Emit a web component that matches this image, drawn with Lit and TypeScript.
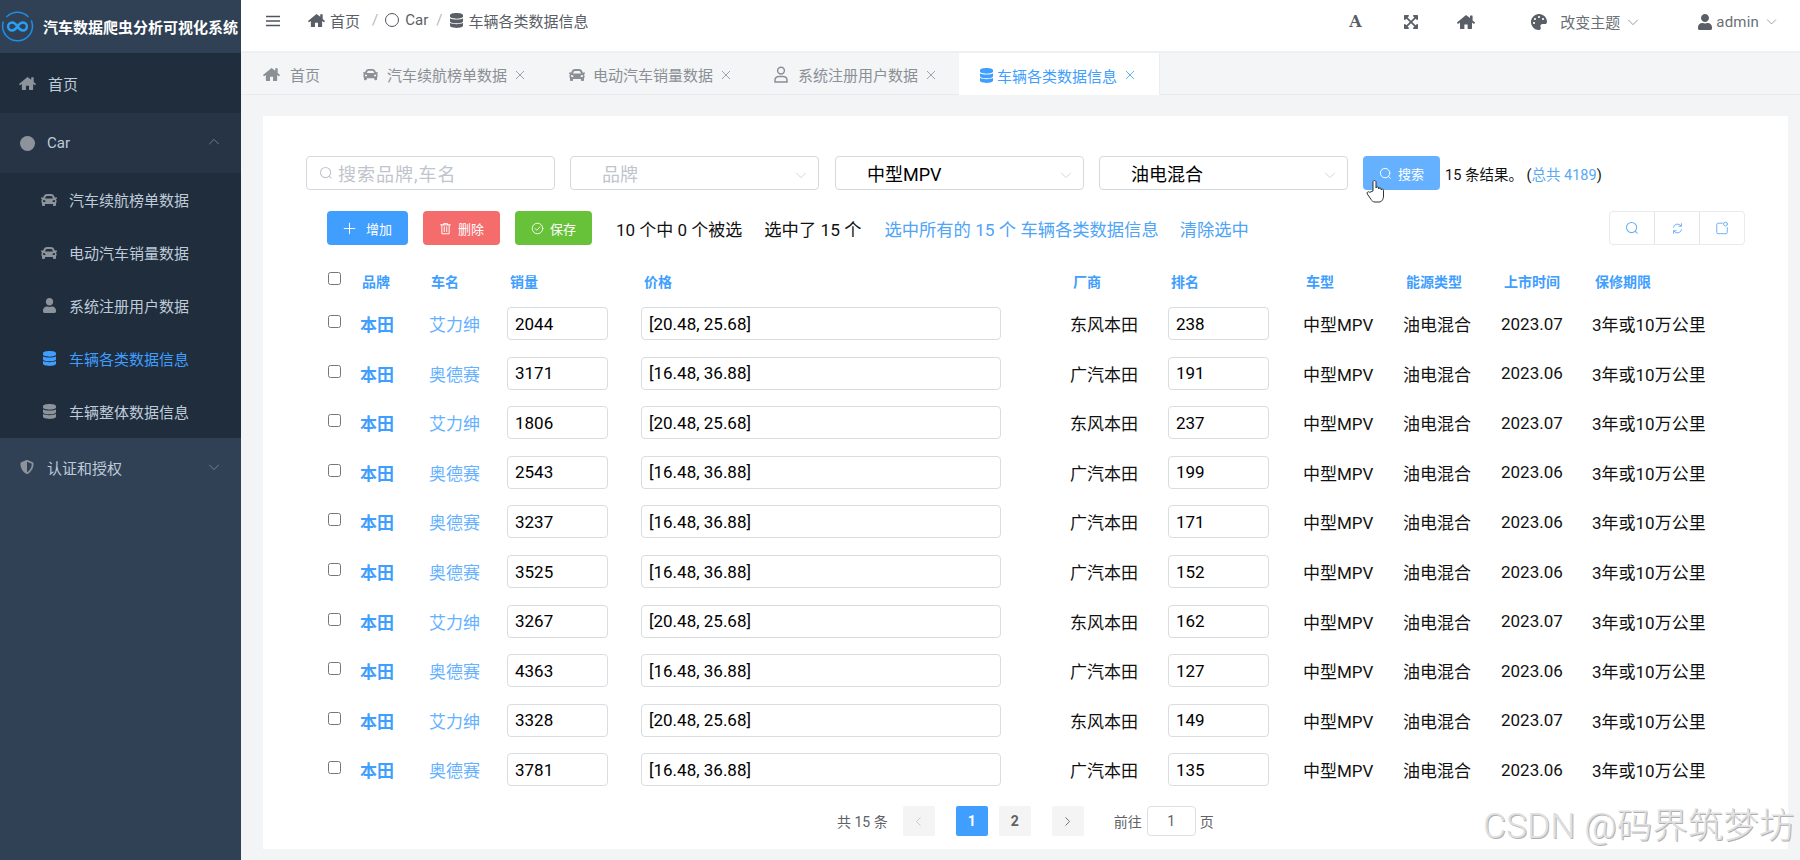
import { LitElement, html, css, svg } from "lit";
import { customElement } from "lit/decorators.js";

const FA = (vb: string, d: string, w: number, h: number) =>
  html`<svg class="ic" width=${w} height=${h} viewBox=${vb} fill="currentColor"><path d=${d}></path></svg>`;
const P = {
  home: "M288 32L8 262c-8 7-9 17-3 25l18 22c7 8 17 9 25 2l48-39v188c0 10 8 16 16 16h124V336h104v140h124c10 0 16-8 16-16V272l48 39c8 7 18 6 25-2l18-22c6-8 5-18-3-25l-69-57V60c0-8-6-14-14-14h-56c-8 0-14 6-14 14v66z",
  car: "M499.99 176h-59.87l-16.64-41.6C406.38 91.63 365.57 64 319.5 64h-127c-46.06 0-86.88 27.63-103.99 70.4L71.87 176H12.01C4.2 176-1.53 183.34.37 190.91l6 24C7.7 220.25 12.5 224 18.01 224h20.07C24.65 235.73 16 252.78 16 272v48c0 16.12 6.16 30.67 16 41.93V416c0 17.67 14.33 32 32 32h32c17.67 0 32-14.33 32-32v-32h256v32c0 17.67 14.33 32 32 32h32c17.67 0 32-14.33 32-32v-54.07c9.84-11.25 16-25.8 16-41.93v-48c0-19.22-8.65-36.27-22.07-48H494c5.51 0 10.31-3.75 11.64-9.09l6-24c1.89-7.57-3.84-14.91-11.65-14.91zm-352.06-17.83c7.29-18.22 24.94-30.17 44.57-30.17h127c19.63 0 37.28 11.95 44.57 30.17L384 208H128l19.93-49.83zM96 319.8c-19.2 0-32-12.76-32-31.9S76.8 256 96 256s48 28.71 48 47.85-28.8 15.95-48 15.95zm320 0c-19.2 0-48 3.19-48-15.95S396.8 256 416 256s32 12.76 32 31.9-12.8 31.9-32 31.9z",
  user: "M224 256c70.7 0 128-57.3 128-128S294.7 0 224 0 96 57.3 96 128s57.3 128 128 128zm89.6 32h-16.7c-22.2 10.2-46.9 16-72.9 16s-50.6-5.8-72.9-16h-16.7C60.2 288 0 348.2 0 422.4V464c0 26.5 21.5 48 48 48h352c26.5 0 48-21.5 48-48v-41.6c0-74.2-60.2-134.4-134.4-134.4z",
  db: "M448 73.143v45.714C448 159.143 347.667 192 224 192S0 159.143 0 118.857V73.143C0 32.857 100.333 0 224 0s224 32.857 224 73.143zM448 176v102.857C448 319.143 347.667 352 224 352S0 319.143 0 278.857V176c48.125 33.143 136.208 48.572 224 48.572S399.874 209.143 448 176zm0 160v102.857C448 479.143 347.667 512 224 512S0 479.143 0 438.857V336c48.125 33.143 136.208 48.572 224 48.572S399.874 369.143 448 336z",
  palette: "M204.3 5C104.9 24.4 24.8 104.3 5.2 203.4c-37 187 131.7 326.4 258.8 306.7 41.2-6.4 61.4-54.6 42.5-91.7-23.1-45.4 9.9-98.4 60.9-98.4h79.7c35.8 0 64.8-29.6 64.9-65.3C511.5 97.1 368.1-26.9 204.3 5zM96 320c-17.7 0-32-14.3-32-32s14.3-32 32-32 32 14.3 32 32-14.3 32-32 32zm32-128c-17.7 0-32-14.3-32-32s14.3-32 32-32 32 14.3 32 32-14.3 32-32 32zm128-64c-17.7 0-32-14.3-32-32s14.3-32 32-32 32 14.3 32 32-14.3 32-32 32zm128 64c-17.7 0-32-14.3-32-32s14.3-32 32-32 32 14.3 32 32-14.3 32-32 32z",
  shield: "M466.5 83.7l-192-80a48.15 48.15 0 0 0-36.9 0l-192 80C27.7 91.1 16 108.6 16 128c0 198.5 114.5 335.7 221.5 380.3 11.8 4.9 25.1 4.9 36.9 0C360.1 472.6 496 349.3 496 128c0-19.4-11.7-36.9-29.5-44.3zM256.1 446.3l-.1-381 175.9 73.3c-3.3 151.4-82.1 261.1-175.8 307.7z",
  expand: "M448 344v112a23.94 23.94 0 0 1-24 24H312c-21.39 0-32.09-25.9-17-41l36.2-36.2L224 295.6 116.77 402.9 153 439c15.09 15.1 4.39 41-17 41H24a23.94 23.94 0 0 1-24-24V344c0-21.4 25.89-32.1 41-17l36.19 36.2L184.46 256 77.18 148.7 41 184.9c-15.1 15.1-41 4.4-41-17V56a23.94 23.94 0 0 1 24-24h112c21.39 0 32.09 25.9 17 41l-36.2 36.2L224 216.4l107.23-107.3L295 73c-15.09-15.1-4.39-41 17-41h112a23.94 23.94 0 0 1 24 24v112c0 21.4-25.89 32.1-41 17l-36.19-36.2L263.54 256l107.28 107.3L407 327.1c15.1-15.2 41-4.5 41 16.9z",
};
const home = (w = 16) => FA("0 0 576 512", P.home, w, Math.round((w * 512) / 576));
const car = (w = 16) => FA("0 0 512 512", P.car, w, w);
const user = (w = 13) => FA("0 0 448 512", P.user, w, Math.round((w * 512) / 448));
const db = (w = 13) => FA("0 0 448 512", P.db, w, Math.round((w * 512) / 448));

const line = (size: number, body: unknown, sw = 1) =>
  html`<svg class="ic" width=${size} height=${size} viewBox="0 0 16 16" fill="none" stroke="currentColor" stroke-width=${sw} stroke-linecap="round" stroke-linejoin="round">${body}</svg>`;
const search = (s = 13) => line(s, svg`<circle cx="7.5" cy="7.5" r="5.8"></circle><path d="M11.8 11.8L14 14"></path>`, 1.2);
const chevDown = (s = 12) => line(s, svg`<path d="M2 5.5l6 6 6-6"></path>`, 1);
const chevUp = (s = 12) => line(s, svg`<path d="M2 10.5l6-6 6 6"></path>`, 1);
const close = (s = 10) => line(s, svg`<path d="M2 2l12 12M14 2L2 14"></path>`, 1.3);
const userOutline = html`<svg class="ic" width="14" height="17" viewBox="0 0 14 17" fill="none" stroke="currentColor" stroke-width="1.5"><circle cx="7" cy="4.6" r="3.4"></circle><path d="M1 16v-1.6C1 11.9 3 10.6 5 10.6h4c2 0 4 1.3 4 3.8V16z"></path></svg>`;

const rows = [
  ["艾力绅", "2044", "[20.48, 25.68]", "东风本田", "238", "2023.07"],
  ["奥德赛", "3171", "[16.48, 36.88]", "广汽本田", "191", "2023.06"],
  ["艾力绅", "1806", "[20.48, 25.68]", "东风本田", "237", "2023.07"],
  ["奥德赛", "2543", "[16.48, 36.88]", "广汽本田", "199", "2023.06"],
  ["奥德赛", "3237", "[16.48, 36.88]", "广汽本田", "171", "2023.06"],
  ["奥德赛", "3525", "[16.48, 36.88]", "广汽本田", "152", "2023.06"],
  ["艾力绅", "3267", "[20.48, 25.68]", "东风本田", "162", "2023.07"],
  ["奥德赛", "4363", "[16.48, 36.88]", "广汽本田", "127", "2023.06"],
  ["艾力绅", "3328", "[20.48, 25.68]", "东风本田", "149", "2023.07"],
  ["奥德赛", "3781", "[16.48, 36.88]", "广汽本田", "135", "2023.06"],
];
const heads = ["品牌", "车名", "销量", "价格", "厂商", "排名", "车型", "能源类型", "上市时间", "保修期限"];

@customElement("app-root")
export class AppRoot extends LitElement {
  static styles = css`
    :host { display: block; width: 1800px; height: 860px; overflow: hidden; position: relative;
      font-family: Roboto, "Noto Sans CJK SC", sans-serif; background: #f3f4f6; }
    * { box-sizing: border-box; }
    .ic { display: block; flex: none; }
    .app { display: flex; height: 860px; }

    .side { width: 241px; flex: none; background: #304156; color: #bfcbd9; font-size: 15px; }
    .logo { height: 53px; display: flex; align-items: center; padding: 0 0 0 1px; gap: 9px; color: #fff; font-weight: 700; font-size: 15px; white-space: nowrap; }
    .logo svg { flex: none; }
    .mi { display: flex; align-items: center; gap: 12px; padding-left: 20px; height: 60px; position: relative; }
    .mi .ic { color: #8d939b; }
    .mi.home { background: #1f2d3d; padding-left: 19px; }
    .mi.car { background: #263445; }
    .mi.last { height: 58px; gap: 13px; }
    .dot { width: 15px; height: 15px; border-radius: 50%; background: #8d939b; flex: none; }
    .mi .chev { position: absolute; left: 208px; top: 23px; color: #7d8794; }
    .sub { background: #1f2d3d; }
    .si { height: 53px; display: flex; align-items: center; padding-left: 41px; gap: 12px; }
    .si .ic { color: #8d939b; }
    .si .slot { width: 16px; display: flex; justify-content: center; flex: none; }
    .si.on, .si.on .ic { color: #409eff; }

    .main { flex: 1; min-width: 0; display: flex; flex-direction: column; }
    .top { height: 53px; flex: none; background: #fff; border-bottom: 2px solid #eef0f3; display: flex; align-items: center; padding: 0 23px 11px 25px; color: #5a5e66; font-size: 15px; position: relative; }
    .burger { color: #50545b; margin-right: 28px; margin-top: 2px; }
    .crumb { display: flex; align-items: center; }
    .crumb .sep { color: #b4b8be; margin: 0 7px 0 12px; }
    .crumb .ring { width: 14px; height: 14px; border: 1.5px solid #50545b; border-radius: 50%; margin-right: 6px; }
    .crumb .t { margin-left: 5px; }
    .crumb .sep2 { color: #b4b8be; margin: 0 8px; }
    .tools { margin-left: auto; display: flex; align-items: center; color: #5a5e66; padding-top: 3px; }
    .tools .a { font-family: "DejaVu Serif", "Liberation Serif", serif; font-weight: 700; font-size: 16px; width: 14px; line-height: 18px; margin-right: 41px; }
    .tools .gap1 { margin-right: 39px; }
    .tools .gap2 { margin-right: 56px; }
    .tools .t2 { margin-left: 13px; color: #6b6f76; }
    .tools .c { margin-left: 7px; color: #777; }
    .tools .gap3 { margin-right: 59px; }
    .tools .t3 { margin-left: 4px; font-size: 15px; letter-spacing: .2px; color: #6b6f76; }
    .tools .c2 { margin-left: 7px; color: #777; }

    .tabs { height: 42px; flex: none; background: #f4f5f7; border-bottom: 1px solid #e8eaed; display: flex; font-size: 15px; color: #8b8f96; padding-left: 2px; gap: 3px; }
    .tab { display: flex; align-items: center; height: 41px; padding: 2px 20px 0; white-space: nowrap; }
    .tab .ic { color: #8b8f96; }
    .tab .x { margin-left: 8px; color: #a0a4aa; }
    .tab.a { background: #fff; color: #409eff; height: 42px; padding: 2px 24px 0 21px; border-right: 1px solid #ecedf0; }
    .tab.a .ic { color: #409eff; }

    .body { flex: 1; padding: 21px 12px 11px 22px; min-height: 0; }
    .card { background: #fff; height: 100%; padding: 40px 43px 0 43px; }

    .filter { display: flex; align-items: stretch; height: 34px; font-size: 18px; color: #000; }
    .box { border: 1px solid #d5d8de; border-radius: 4px; display: flex; align-items: center; position: relative; background: #fff; }
    .box.s1 { width: 249px; padding-left: 12px; margin-right: 15px; color: #c0c4cc; gap: 5px; letter-spacing: 1px; }
    .box.s { width: 249px; padding-left: 31px; margin-right: 15px; }
    .box.s.ph { color: #c0c4cc; margin-right: 16px; }
    .box .chev { position: absolute; right: 11px; top: 12px; color: #c3c7ce; }
    .go { width: 77px; background: #66b1ff; border-radius: 4px; color: #fff; font-size: 13px; display: flex; align-items: center; justify-content: center; gap: 6px; position: relative; }
    .res { margin-left: 5px; font-size: 14.5px; align-self: center; color: #111; white-space: nowrap; }
    .res span { color: #5aa9f5; }
    .hand { position: absolute; left: 3px; top: 23px; z-index: 2; }

    .bar { display: flex; align-items: center; height: 34px; margin: 21px 0 0 21px; font-size: 17px; color: #111; white-space: nowrap; }
    .btn { height: 34px; border-radius: 4px; color: #fff; font-size: 13px; display: flex; align-items: center; justify-content: center; }
    .btn.add { width: 81px; background: #409eff; gap: 10px; margin-right: 15px; }
    .btn.del { width: 77px; background: #f56c6c; gap: 6px; margin-right: 15px; }
    .btn.sav { width: 77px; background: #67c23a; gap: 6px; margin-right: 24px; }
    .bar .p2 { margin-left: 22px; font-size: 17.3px; }
    .bar .l1 { margin-left: 23px; color: #4ea4f7; font-size: 17.3px; }
    .bar .l2 { margin-left: 21px; color: #4ea4f7; font-size: 17.3px; }
    .grp { margin-left: auto; display: flex; width: 136px; height: 34px; border: 1px solid #e8eaee; border-radius: 4px; color: #69b0f5; }
    .grp div { flex: 1; display: flex; align-items: center; justify-content: center; border-left: 1px solid #e2e4e8; }
    .grp div:first-child { border-left: 0; }

    .tb { margin-left: 22px; }
    .hd, .rw { display: grid; grid-template-columns: 32px 69px 78px 134px 429px 98px 135px 100px 98px 91px auto; align-items: center; white-space: nowrap; }
    .hd { height: 37px; margin-top: 17px; color: #409eff; font-weight: 700; font-size: 14px; }
    .hd > span { padding-left: 2px; }
    .hd > span.n { padding-left: 3px; }
    .hd input, .rw input[type=checkbox] { margin: 0; width: 13px; height: 13px; position: relative; top: -2px; }
    .rw { height: 49.55px; font-size: 17px; color: #111; }
    .rw b { color: #409eff; font-size: 17px; font-weight: 700; }
    .rw a { color: #66b1ff; }
    .rw input.f { height: 33px; border: 1px solid #d9dce1; border-radius: 4px; font: inherit; color: #000; padding: 0 7px; outline: 0; background: #fff; display: block; }
    .w1 { width: 101px; }
    .w2 { width: 360px; }

    .pg { display: flex; align-items: center; height: 30px; margin: 12px 0 0 531px; font-size: 14px; color: #606266; }
    .pb { width: 32px; height: 30px; background: #f4f4f5; border-radius: 2px; display: flex; align-items: center; justify-content: center; color: #606266; font-weight: 700; font-size: 14px; }
    .pb.on { background: #409eff; color: #fff; }
    .pb.dis { color: #c0c4cc; }
    .pgi { width: 49px; height: 30px; border: 1px solid #dcdfe6; border-radius: 4px; display: flex; align-items: center; justify-content: center; margin: 0 4px 0 5px; }

    .wm { position: absolute; left: 1483px; top: 804px; font-size: 35.5px; line-height: 44px; color: #e0e0e0; text-shadow: 1px 1px 0 #b0b0b0; white-space: nowrap; pointer-events: none; font-weight: 300; }
  `;

  render() {
    const sideSub = [
      [car(16), "汽车续航榜单数据", false],
      [car(16), "电动汽车销量数据", false],
      [user(13), "系统注册用户数据", false],
      [db(13), "车辆各类数据信息", true],
      [db(13), "车辆整体数据信息", false],
    ] as const;
    return html`
      <div class="app">
        <aside class="side">
          <div class="logo">
            <svg width="33" height="33" viewBox="0 0 33 33" fill="none">
              <path d="M6 6.5A15 15 0 0 1 27 6.5M30.500 11A15 15 0 0 1 27 26.500A15 15 0 0 1 6 26.500A15 15 0 0 1 2.200 12" stroke="#1f8fe6" stroke-width="1.500" stroke-linecap="round"></path>
              <path d="M16.500 16.500c-2-3-3.600-4-5.400-4a4 4 0 0 0 0 8c1.800 0 3.400-1 5.400-4s3.600-4 5.400-4a4 4 0 0 1 0 8c-1.800 0-3.400-1-5.400-4z" stroke="#2aa0f5" stroke-width="2.400"></path>
            </svg>
            <span>汽车数据爬虫分析可视化系统</span>
          </div>
          <div class="mi home">${home(17)}<span>首页</span></div>
          <div class="mi car"><span class="dot"></span><span>Car</span><span class="chev">${chevUp(12)}</span></div>
          <div class="sub">
            ${sideSub.map(([ic, t, on]) => html`<div class="si ${on ? "on" : ""}"><span class="slot">${ic}</span><span>${t}</span></div>`)}
          </div>
          <div class="mi last">${FA("0 0 512 512", P.shield, 14, 14)}<span>认证和授权</span><span class="chev">${chevDown(12)}</span></div>
        </aside>
        <div class="main">
          <header class="top">
            <svg class="ic burger" width="14" height="12" viewBox="0 0 14 12" fill="none" stroke="currentColor" stroke-width="1.600"><path d="M0 1.500h14M0 6h14M0 10.500h14"></path></svg>
            <div class="crumb">
              ${home(17)}<span class="t">首页</span><span class="sep">/</span>
              <span class="ring"></span><span>Car</span><span class="sep2">/</span>
              ${db(13)}<span class="t">车辆各类数据信息</span>
            </div>
            <div class="tools">
              <span class="a">A</span>
              <span class="gap1">${FA("0 32 448 448", P.expand, 14, 14)}</span>
              <span class="gap2">${home(18)}</span>
              ${FA("0 0 512 512", P.palette, 16, 16)}
              <span class="t2">改变主题</span><span class="c gap3">${chevDown(12)}</span>
              ${user(14)}<span class="t3">admin</span><span class="c2">${chevDown(11)}</span>
            </div>
          </header>
          <nav class="tabs">
            <div class="tab">${home(17)}<span style="margin-left:10px">首页</span></div>
            <div class="tab">${car(15)}<span style="margin-left:9px">汽车续航榜单数据</span><span class="x">${close()}</span></div>
            <div class="tab" style="margin-left:1px">${car(16)}<span style="margin-left:8px">电动汽车销量数据</span><span class="x">${close()}</span></div>
            <div class="tab"><span style="margin-right:10px">${userOutline}</span>系统注册用户数据<span class="x">${close()}</span></div>
            <div class="tab a">${db(13)}<span style="margin-left:4px">车辆各类数据信息</span><span class="x" style="color:#409eff">${close()}</span></div>
          </nav>
          <div class="body">
            <section class="card">
              <div class="filter">
                <div class="box s1">${search(14)}<span>搜索品牌,车名</span></div>
                <div class="box s ph">品牌<span class="chev">${chevDown(12)}</span></div>
                <div class="box s">中型MPV<span class="chev">${chevDown(12)}</span></div>
                <div class="box s">油电混合<span class="chev">${chevDown(12)}</span></div>
                <div class="go">${search(13)}<span>搜索</span>
                  <svg class="hand" width="20" height="24" viewBox="0 0 20 24" fill="#fff" stroke="#333" stroke-width="1" stroke-linejoin="round"><path d="M7 12V3c0-2 3-2 3 0v6c0-1.500 2.600-1.500 2.600 0v1c0-1.500 2.600-1.500 2.600 0v1c0-1.300 2.300-1.300 2.300.2V17c0 3-1.600 6-4.500 6H9c-2 0-3-1-4-2.600L1.300 15c-1-1.700 1-3 2.500-1.700z"></path></svg>
                </div>
                <div class="res">15 条结果。 (<span>总共 4189</span>)</div>
              </div>
              <div class="bar">
                <div class="btn add">${line(13, svg`<path d="M8 1.500v13M1.500 8h13"></path>`, 1.2)}<span>增加</span></div>
                <div class="btn del">${line(13, svg`<path d="M2 3.500h12M5.500 3.500V2h5v1.500M3.500 3.500V14.500h9V3.500M6.500 6v6M9.500 6v6"></path>`, 1.2)}<span>删除</span></div>
                <div class="btn sav">${line(13, svg`<circle cx="8" cy="8" r="6.500"></circle><path d="M5 8l2.200 2.200L11 6"></path>`, 1.1)}<span>保存</span></div>
                <span>10 个中 0 个被选</span>
                <span class="p2">选中了 15 个</span>
                <span class="l1">选中所有的 15 个 车辆各类数据信息</span>
                <span class="l2">清除选中</span>
                <div class="grp">
                  <div>${search(14)}</div>
                  <div>${line(13, svg`<path d="M3 6.500A5.200 5.200 0 0 1 12.500 5M13 9.500A5.200 5.200 0 0 1 3.500 11M12.800 2v3.200H9.600M3.200 14v-3.200h3.200"></path>`, 1.2)}</div>
                  <div>${line(14, svg`<path d="M8.500 2.500H3.500a1.500 1.500 0 0 0-1.500 1.500v9a1.500 1.500 0 0 0 1.500 1.500h9a1.500 1.500 0 0 0 1.500-1.500V7.500"></path><circle cx="12" cy="3.500" r="2.200"></circle>`, 1.1)}</div>
                </div>
              </div>
              <div class="tb">
                <div class="hd">
                  <input type="checkbox" />
                  ${heads.map((h, i) => html`<span class=${i >= 2 ? "n" : ""}>${h}</span>`)}
                </div>
                ${rows.map(
                  (r) => html`<div class="rw">
                    <input type="checkbox" />
                    <b>本田</b><a>${r[0]}</a>
                    <input class="f w1" .value=${r[1]} />
                    <input class="f w2" .value=${r[2]} />
                    <span>${r[3]}</span>
                    <input class="f w1" .value=${r[4]} />
                    <span>中型MPV</span><span>油电混合</span><span>${r[5]}</span><span>3年或10万公里</span>
                  </div>`
                )}
              </div>
              <div class="pg">
                <span style="margin-right:15px">共 15 条</span>
                <span class="pb dis" style="margin-right:21px">${line(11, svg`<path d="M10.500 2.500L5 8l5.500 5.500"></path>`, 1.3)}</span>
                <span class="pb on" style="margin-right:11px">1</span>
                <span class="pb" style="margin-right:21px">2</span>
                <span class="pb" style="margin-right:30px">${line(11, svg`<path d="M5.500 2.500L11 8l-5.500 5.500"></path>`, 1.3)}</span>
                <span>前往</span><span class="pgi">1</span><span>页</span>
              </div>
            </section>
          </div>
        </div>
      </div>
      <div class="wm">CSDN @码界筑梦坊</div>
    `;
  }
}
